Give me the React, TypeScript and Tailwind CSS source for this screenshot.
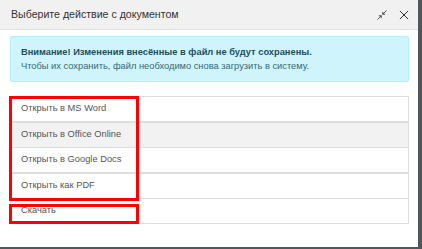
import React from 'react';

const actions = [
  { id: 'word', label: 'Открыть в MS Word', bg: 'bg-white', h: 'h-[26px] border-b-2' },
  { id: 'online', label: 'Открыть в Office Online', bg: 'bg-[#f2f2f2]', h: 'h-[25px] border-b' },
  { id: 'gdocs', label: 'Открыть в Google Docs', bg: 'bg-white', h: 'h-[26px] border-b-2' },
  { id: 'pdf', label: 'Открыть как PDF', bg: 'bg-white', h: 'h-[25px] border-b' },
  { id: 'download', label: 'Скачать', bg: 'bg-white', h: 'h-[25px] border-b' },
];

const App: React.FC = () => {
  return (
    <div className="w-[422px] h-[249px] bg-[#4f575b] font-['Liberation_Sans',Arial,sans-serif]">
      <div className="w-[418px] h-[247px] bg-white flex flex-col">
        {/* Header */}
        <div className="h-[30px] bg-[#f1f1f1] border-b border-[#e2e2e2] flex items-center justify-between pl-[11px] pr-[9px]">
          <span className="text-[10.6px] text-[#333]">Выберите действие с документом</span>
          <div className="flex items-center gap-[12px] text-[#333]">
            <svg width="10" height="10" viewBox="0 0 11 11" fill="none" stroke="currentColor" strokeWidth="0.9">
              <line x1="10.5" y1="0.5" x2="6.3" y2="4.7" />
              <polyline points="6.3,2 6.3,4.7 9,4.7" />
              <line x1="0.5" y1="10.5" x2="4.7" y2="6.3" />
              <polyline points="2,6.3 4.7,6.3 4.7,9" />
            </svg>
            <svg width="10" height="10" viewBox="0 0 11 11" fill="none" stroke="currentColor" strokeWidth="1.1">
              <line x1="1" y1="1" x2="10" y2="10" />
              <line x1="10" y1="1" x2="1" y2="10" />
            </svg>
          </div>
        </div>

        <div className="px-[10px] pt-[6px]">
          {/* Warning */}
          <div className="w-[399px] h-[46px] bg-[#cff4fc] border border-[#b6effb] rounded-[2px] pl-[10px] pt-[8px] text-[9.3px] leading-[14px]">
            <div className="font-bold text-[#1e4f5c]">Внимание! Изменения внесённые в файл не будут сохранены.</div>
            <div className="text-[#356a77]">Чтобы их сохранить, файл необходимо снова загрузить в систему.</div>
          </div>

          {/* Actions list */}
          <div className="relative mt-[14px] w-[399px] border-t border-x border-[#dddddd]">
            {actions.map((a) => (
              <div
                key={a.id}
                className={`${a.h} ${a.bg} border-[#dddddd] flex items-center pl-[10px] text-[9.3px] text-[#555]`}
              >
                {a.label}
              </div>
            ))}
            <div className="absolute left-[-2px] top-[-1px] w-[130px] h-[105px] border-[3px] border-[#ff0000]" />
            <div className="absolute left-[-2px] top-[107px] w-[130px] h-[20px] border-[3px] border-[#ff0000]" />
          </div>
        </div>
      </div>
    </div>
  );
};

export default App;
